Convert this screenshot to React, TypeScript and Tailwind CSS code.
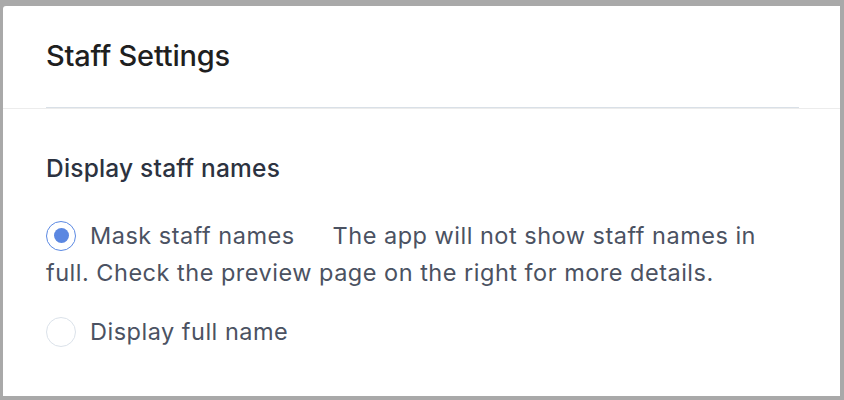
import React from 'react'

// ── Radio dot ────────────────────────────────────────────────
function Radio({ checked }: { checked?: boolean }) {
  return (
    <span
      className={
        checked
          ? 'inline-flex items-center justify-center w-[30px] h-[30px] rounded-full border-[1.5px] border-[#5b89e3] bg-white align-middle relative top-[-2px]'
          : 'inline-flex items-center justify-center w-[30px] h-[30px] rounded-full border-[1.5px] border-[#dbe2ea] bg-white align-middle relative top-[-2px]'
      }
    >
      {checked && <span className="block w-[15px] h-[15px] rounded-full bg-[#5b87e1]" />}
    </span>
  )
}

export default function App() {
  return (
    <div
      className="w-[844px] h-[400px] bg-[#a9a9a9] pt-[6px] pl-[3px] pr-[4px] pb-[4px]"
      style={{ fontFamily: 'Inter, "Noto Sans", sans-serif' }}
    >
      <div className="h-full bg-white rounded-tl-[3px] flex flex-col">
        {/* header */}
        <div className="border-b border-[#ececec]">
          <div className="ml-[43px] mr-[41px] pt-[30px] pb-[31px] border-b border-[#d9e0e7]">
            <h2 className="text-[29px] leading-[40px] font-medium text-[#1f1f1f] tracking-[-0.2px]">
              Staff Settings
            </h2>
          </div>
        </div>

        {/* body */}
        <div className="pl-[43px] pr-[41px] pt-[43px]">
          <h3 className="text-[24.5px] leading-[32px] font-medium text-[#2c3240] tracking-[0.2px]">
            Display staff names
          </h3>

          <div className="mt-[33px] text-[23.5px] leading-[37px] text-[#4b5262] tracking-[0.5px]">
            <p>
              <Radio checked />
              <span className="ml-[14px]">Mask staff names</span>
              <span className="ml-[38px]">
                The app will not show staff names in full. Check the preview page on the right for more details.
              </span>
            </p>
            <p className="mt-[22px]">
              <Radio />
              <span className="ml-[14px]">Display full name</span>
            </p>
          </div>
        </div>
      </div>
    </div>
  )
}
